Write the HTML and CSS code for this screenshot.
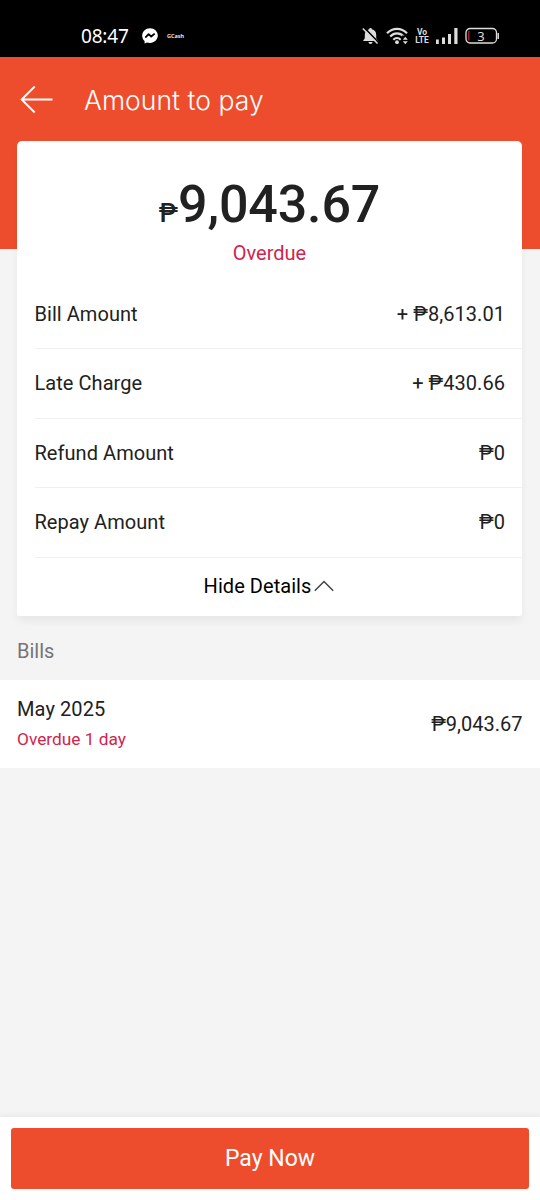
FILE: index.html
```html
<!DOCTYPE html>
<html lang="en">
<head>
<meta charset="utf-8">
<meta name="viewport" content="width=device-width">
<title>Amount to pay</title>
<link rel="stylesheet" href="styles.css">
</head>
<body>
<div class="screen">
  <div class="status">
    <span class="clock">08:47</span>
    <svg class="messenger" width="16" height="16" viewBox="0 0 16 16"><path fill="#fff" d="M8 .3C3.600.3.2 3.500.2 7.700c0 2.200.9 4 2.400 5.400v2.500l2.300-1.200c1 .3 2 .5 3.100.5 4.400 0 7.800-3.200 7.800-7.300S12.400.3 8 .3z"/><path d="M3.300 9.700 6.600 6.200 9.200 8.500 12.700 5.600" fill="none" stroke="#000" stroke-width="1.800" stroke-linejoin="round"/></svg>
    <span class="gcash">GCash</span>
    <div class="indicators">
      <svg width="17" height="18" viewBox="0 0 17 18"><path fill="#ddd" d="M8.500 1c.8 0 1.300.5 1.300 1.300C12.800 3 14.200 5 14.200 7.800v3.400L16 14H1l1.800-2.800V7.800C2.800 5 4.200 3 7.200 2.300 7.200 1.500 7.700 1 8.500 1zM6.400 15h4.200c-.2 1.300-1 2-2.100 2s-1.900-.7-2.100-2z"/><path d="M2 .4 16.500 15.400" stroke="#000" stroke-width="1.600"/><path d="M.8 1.500 15.500 16.500" stroke="#ddd" stroke-width="1.500"/></svg>
      <svg class="wifi" width="23" height="18" viewBox="0 0 23 18"><g fill="none" stroke="#ddd" stroke-width="2.200"><path d="M1 6.300C6.800.4 15.200.4 21 6.300"/><path d="M4.200 9.500c4-4.100 9.600-4.100 13.600 0"/><path d="M7.300 12.700c2.200-2.200 5.200-2.200 7.400 0"/></g><circle cx="11" cy="15.200" r="1.900" fill="#ddd"/><path d="M15.800 8.500h7V18h-7z"/><path fill="#ddd" d="m19.300 9.800 2.500 3h-5zM16.800 14.200h5l-2.500 3z"/></svg>
      <span class="volte"><span>Vo</span><span>LTE</span></span>
      <svg class="signal" width="22" height="16" viewBox="0 0 22 16"><path fill="#ddd" d="M0 11.500h2.800V16H0zM6 9.500h3V16H6zM12 6h3v10h-3zM18.300 0h3.200v16h-3.200z"/></svg>
      <svg class="battery" width="35" height="18" viewBox="0 0 35 18"><rect x="1" y="1.500" width="30.500" height="14.500" rx="4" fill="none" stroke="#ddd" stroke-width="1.300"/><path d="M3.800 4v9.500" stroke="#b32530" stroke-width="1.300"/><path d="M33.200 6v6" stroke="#ddd" stroke-width="1.500"/><text class="charge" x="16" y="13.500" text-anchor="middle" fill="#ddd">3</text></svg>
    </div>
  </div>
  <header class="header">
    <svg class="back" width="34" height="28" viewBox="0 0 34 28"><path d="M14.700 1.500 1.700 14.500l13 13M1.700 14.500h30.800" fill="none" stroke="#fff" stroke-width="2"/></svg>
    <h1 class="title">Amount to pay</h1>
  </header>
  <section class="card">
    <div class="total"><span class="peso">₱</span><span class="sum">9,043.67</span></div>
    <div class="state">Overdue</div>
    <div class="rows">
      <div class="row"><span>Bill Amount</span><span class="value">+ ₱8,613.01</span></div>
      <div class="row"><span>Late Charge</span><span class="value">+ ₱430.66</span></div>
      <div class="row"><span>Refund Amount</span><span class="value">₱0</span></div>
      <div class="row"><span>Repay Amount</span><span class="value">₱0</span></div>
    </div>
    <div class="toggle">Hide Details<svg width="20" height="12" viewBox="0 0 20 12"><path d="M.8 10.800 10 1.500l9.200 9.300" fill="none" stroke="#444" stroke-width="1.500"/></svg></div>
  </section>
  <h2 class="bills">Bills</h2>
  <div class="bill">
    <div><div class="month">May 2025</div><div class="late">Overdue 1 day</div></div>
    <span class="due">₱9,043.67</span>
  </div>
  <footer class="footer"><button class="pay">Pay Now</button></footer>
</div>
</body>
</html>
```
FILE: styles.css
```css
* { box-sizing: border-box; }
body { margin: 0; font-family: Roboto, sans-serif; color: #212121; }
svg { display: block; flex: none; }
.screen { height: 1200px; width: 540px; display: flex; flex-direction: column; background: #f4f4f4; }
.status { height: 57px; flex: none; background: #000; display: flex; align-items: center; padding: 15px 40px 0 81px; color: #fff; }
.clock { font: 19px/20px "Noto Sans", sans-serif; width: 61px; letter-spacing: -.2px; }
.gcash { font: 600 5.500px/8px "Noto Sans", sans-serif; margin-left: 9px; }
.indicators { display: flex; align-items: center; margin-left: auto; color: #ddd; }
.wifi { margin-left: 7px; }
.volte { display: flex; flex-direction: column; align-items: center; font: 700 8.500px/8.500px Roboto, sans-serif; width: 14px; margin-left: 6px; }
.signal { margin-left: 7px; }
.battery { margin-left: 7px; }
.charge { font: 13px "Noto Sans", sans-serif; }
.header { height: 192px; flex: none; background: #ee4d2d; color: #fff; display: flex; align-items: flex-start; padding: 28px 20px 0; }
.title { margin: -1px 0 0 30px; font: 300 26.500px/32px Inter, Roboto, sans-serif; letter-spacing: .05px; }
.card { height: 475px; flex: none; margin: -108px 18px 0 17px; background: #fff; border-radius: 5px 5px 2px 2px; box-shadow: 0 6px 8px -1px rgba(0, 0, 0, .06); }
.total { height: 64px; margin-top: 32px; display: flex; justify-content: center; align-items: baseline; font-weight: 500; line-height: 64px; }
.peso { font-size: 26px; }
.sum { font-size: 52px; letter-spacing: -.15px; }
.state { text-align: center; color: #d0254e; font-size: 20px; line-height: 32px; }
.rows { margin-left: 17.500px; padding-top: 10.500px; }
.row { height: 69.500px; border-bottom: 1px solid #f0f0f0; display: flex; justify-content: space-between; align-items: center; padding-right: 17px; font-size: 20px; letter-spacing: .05px; }
.toggle { height: 58px; display: flex; align-items: center; justify-content: center; gap: 3px; font-size: 20px; color: #000; letter-spacing: .05px; padding: 0 1px 1px 0; }
.bills { margin: 0; height: 64px; flex: none; padding: 6px 17px 0; font-size: 20px; line-height: 58px; font-weight: 400; color: #757575; }
.bill { height: 88px; flex: none; background: #fff; padding: 0 17.500px 3px 17px; display: flex; justify-content: space-between; align-items: center; font-size: 20px; }
.month { line-height: 32px; letter-spacing: .1px; }
.late { color: #d0254e; font-size: 17.300px; line-height: 28px; }
.due { padding-top: 2px; }
.footer { height: 83px; flex: none; margin-top: auto; background: #fff; padding: 11px 11px; box-shadow: 0 -2px 5px rgba(0, 0, 0, .05); }
.pay { width: 100%; height: 61px; border: 0; border-radius: 3px; background: #ee4d2d; color: #fff; font: 23px Roboto, sans-serif; }
```
